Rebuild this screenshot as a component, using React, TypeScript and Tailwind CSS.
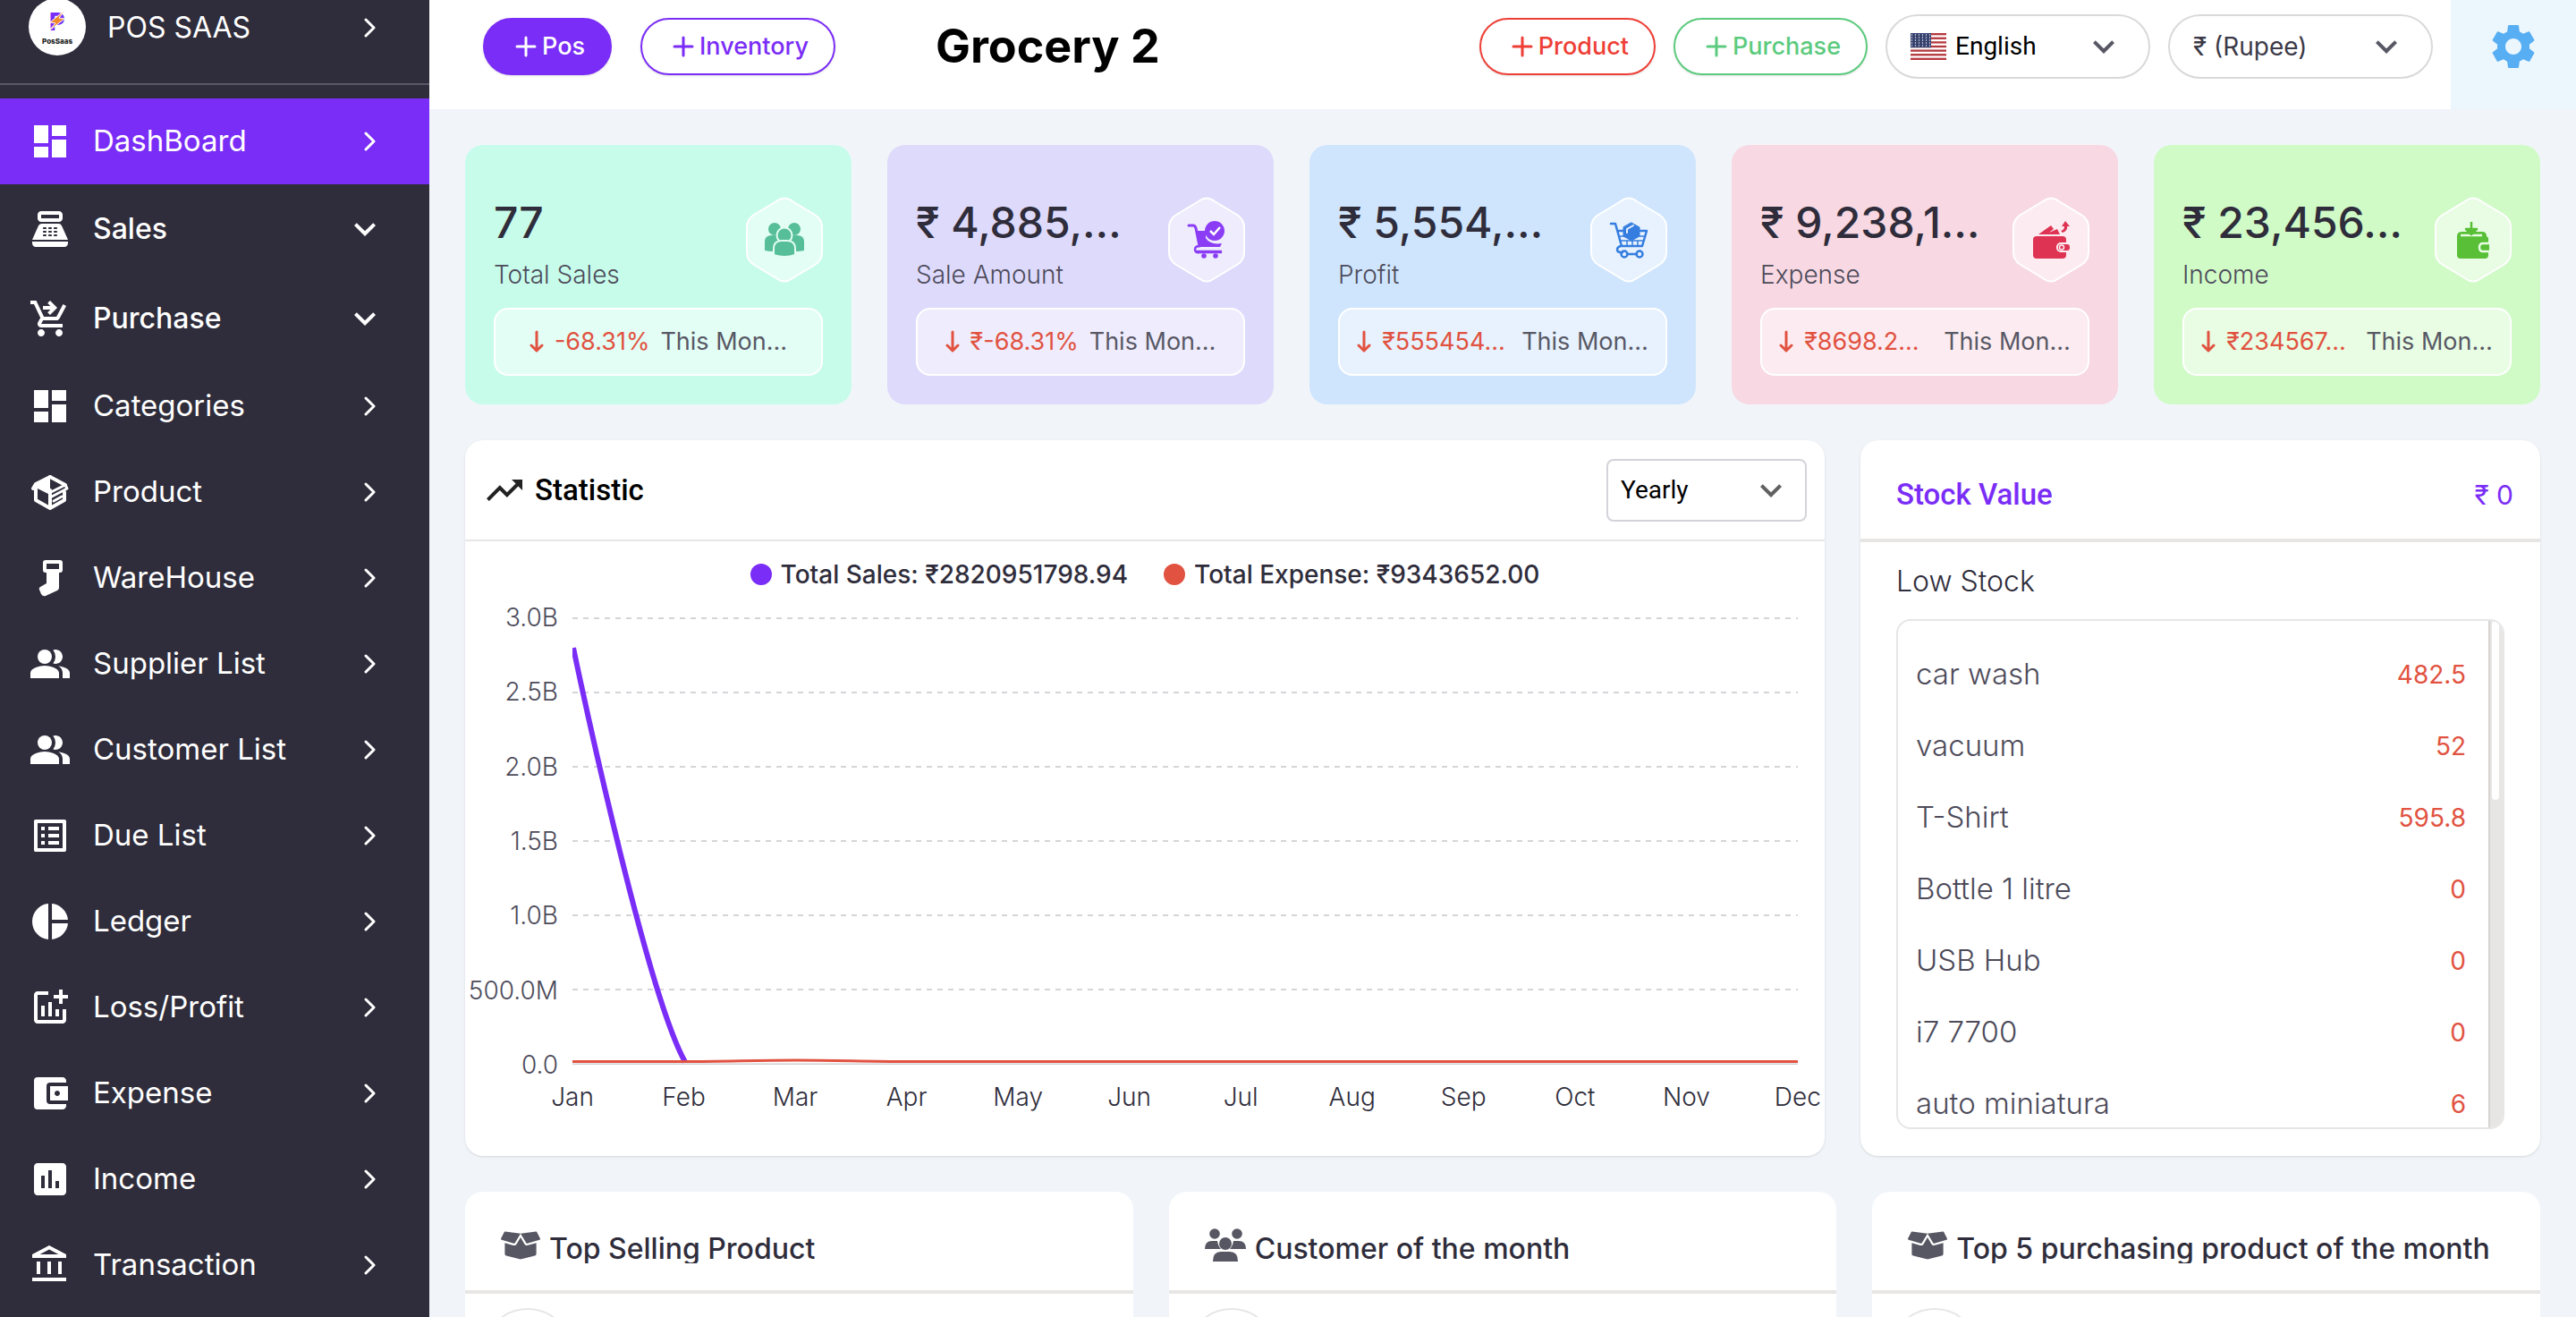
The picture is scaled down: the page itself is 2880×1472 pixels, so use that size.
import type { ComponentType, ReactNode } from "react";
import {
  MdAccountBalanceWallet,
  MdAddchart,
  MdAssessment,
  MdDashboard,
  MdKeyboardArrowDown,
  MdListAlt,
  MdOutlineAccountBalance,
  MdPeopleAlt,
  MdPieChart,
  MdPointOfSale,
  MdSettings,
  MdShoppingCartCheckout,
  MdTrendingUp,
} from "react-icons/md";
import { FaBoxOpen } from "react-icons/fa";

type IconType = ComponentType<{ className?: string }>;

/* ---------- drawings ---------- */

function Logo() {
  return (
    <svg viewBox="0 0 64 64" className="size-16 shrink-0" role="img" aria-label="PosSaas">
      <circle cx="32" cy="32" r="32" fill="#fff" />
      <text x="23" y="36" fontSize="27" fontWeight="800" fill="#7a2df6" fontFamily="Inter, sans-serif">P</text>
      <path d="M41 13 24 27l6 1-8 9 18-14-6-1z" fill="#f08a2c" stroke="#fff" strokeWidth="1" />
      <text x="32" y="51" fontSize="8" fontWeight="800" fill="#222" textAnchor="middle" fontFamily="Inter, sans-serif">PosSaas</text>
    </svg>
  );
}

function ProductIcon({ className }: { className?: string }) {
  return (
    <svg viewBox="0 0 48 48" className={className} fill="none" stroke="currentColor" strokeWidth="4" strokeLinejoin="round" strokeLinecap="round">
      <path d="M8 20v13l16 9 16-9V24" />
      <path d="M24 22v19" />
      <path d="M24 7 8 15l-3 5" />
      <path d="M24 7l17 9" />
      <path d="M24 6 9 15l-4 5 4 2 1-2 14 7z" fill="currentColor" stroke="none" />
      <path d="M25 24l16-8 2 4-17 9" strokeWidth="3" />
      <path d="M28 34l9-5" strokeWidth="3" />
    </svg>
  );
}

function WarehouseIcon({ className }: { className?: string }) {
  return (
    <svg viewBox="0 0 48 48" className={className} fill="none" stroke="currentColor" strokeWidth="4" strokeLinejoin="round">
      <rect x="18" y="6" width="18" height="10" rx="1" />
      <path d="M20 16v14l-7 4q-2 1-1 3l2 5q2 3 5 2l13-6q2-1 2-3V16z" fill="currentColor" stroke="none" />
    </svg>
  );
}

function ChevronRight() {
  return (
    <svg viewBox="0 0 14 24" className="mr-[59px] h-6 w-3.5 shrink-0" fill="none" stroke="currentColor" strokeWidth="3" strokeLinecap="round" strokeLinejoin="round">
      <path d="M2 3l9 9-9 9" />
    </svg>
  );
}

function PlusIcon() {
  return (
    <svg viewBox="0 0 24 24" className="size-6 shrink-0" stroke="currentColor" strokeWidth="3" strokeLinecap="round">
      <path d="M12 2v20M2 12h20" />
    </svg>
  );
}

function ArrowDown() {
  return (
    <svg viewBox="0 0 16 26" className="h-[26px] w-4 shrink-0" fill="none" stroke="currentColor" strokeWidth="3" strokeLinecap="round" strokeLinejoin="round">
      <path d="M8 2v21M2 17l6 6 6-6" />
    </svg>
  );
}

function Flag() {
  const stripes = [0, 2, 4, 6, 8, 10, 12];
  const rows = [2, 5, 8, 11, 14];
  const cols = [2, 6, 10, 14, 18, 22];
  return (
    <svg viewBox="0 0 40 30" className="h-[30px] w-10 shrink-0" preserveAspectRatio="none" aria-hidden="true">
      <rect width="40" height="30" fill="#fff" />
      {stripes.map((s) => (
        <rect key={s} y={(s * 30) / 13} width="40" height={30 / 13} fill="#b5383f" />
      ))}
      <rect width="23" height="16.2" fill="#35406e" />
      {rows.map((y) => cols.map((x) => <circle key={`${x}-${y}`} cx={x - 0.5} cy={y} r="0.7" fill="#fff" />))}
    </svg>
  );
}

function HexBadge({ children }: { children: ReactNode }) {
  return (
    <svg viewBox="0 0 86 96" className="mt-1 h-24 w-[86px] shrink-0" aria-hidden="true">
      <path
        d="M34 5Q43 -2 52 5L77 20Q85 25 85 34V62Q85 71 77 76L52 91Q43 98 34 91L9 76Q1 71 1 62V34Q1 25 9 20Z"
        fill="#fff"
        fillOpacity="0.5"
        stroke="#fff"
        strokeWidth="2"
      />
      {children}
    </svg>
  );
}

const crowdArt = (
  <g fill="#56be98">
    <circle cx="32" cy="36" r="7" />
    <circle cx="54" cy="36" r="7" />
    <path d="M21 60V50q0-7 8-7h6q5 0 5 5v12q-10 2-19 0zM65 60V50q0-7-8-7h-6q-5 0-5 5v12q10 2 19 0z" />
    <circle cx="43" cy="43" r="8.5" stroke="#e3fdf5" strokeWidth="2" />
    <path d="M31 65V58q0-9 9-9h6q9 0 9 9v7q-12 4-24 0z" stroke="#e3fdf5" strokeWidth="2" />
  </g>
);

const saleArt = (
  <g>
    <path d="M23 32h5q2 0 3 3l4 20" fill="none" stroke="#8b3df5" strokeWidth="3" strokeLinecap="round" />
    <path d="M32 38h10v8q5 8 18 6l-2 4H35z" fill="#8b3df5" />
    <path d="M35 55q-5 0-5 4t5 3h24M31 61h28" fill="none" stroke="#8b3df5" strokeWidth="2.5" strokeLinecap="round" />
    <circle cx="40" cy="66" r="2.8" fill="#8b3df5" />
    <circle cx="53" cy="66" r="2.8" fill="#8b3df5" />
    <circle cx="52" cy="38" r="11" fill="#8b3df5" />
    <path d="M47 38l4 4 7-8" fill="none" stroke="#fff" strokeWidth="2.5" />
  </g>
);

const profitArt = (
  <g fill="none" stroke="#357ddf" strokeWidth="2.5" strokeLinecap="round" strokeLinejoin="round">
    <path d="M23 30h5l7 25M31 38h6M56 38h7l-5 17H34q-4 1-4 4t4 3h2M41 64h11" />
    <path d="M33 44h6M55 44h6M34 49h26M41 49v6M47 49v6M53 49v6" strokeWidth="1.5" />
    <circle cx="38" cy="64" r="3.5" />
    <circle cx="55" cy="64" r="3.5" />
    <path d="M46 29l9 5v10l-9 5-9-5V34z" fill="#357ddf" stroke-width="1" />
    <path d="M41 40v-4l7-4" stroke="#e7f2fe" strokeWidth="2" />
  </g>
);

const expenseArt = (
  <g fill="#de3353">
    <rect x="23" y="44" width="37" height="25" rx="4" />
    <path d="M29 42l14-10 3 4-8 6zM36 42l14-6 3 6z" />
    <path d="M56 40q6-2 5-7h3l-5-6-4 6h3q0 4-4 5z" />
    <rect x="50" y="52" width="15" height="9" rx="4" stroke="#fdebf0" strokeWidth="2" />
    <circle cx="55" cy="56.500" r="2.500" fill="#de3353" stroke="#fdebf0" strokeWidth="1.500" />
  </g>
);

const incomeArt = (
  <g fill="#58bf36">
    <path d="M25 44q0-5 6-5h22q5 0 5 5l2 2v19q0 4-4 4H29q-4 0-4-4z" />
    <path d="M29 43h24M42 39" stroke="#e7fde3" strokeWidth="2.500" />
    <path d="M41 28v12M35 36l6 6 6-6z" stroke="#58bf36" strokeWidth="2.500" strokeLinejoin="round" />
    <path d="M61 52h-7q-4 0-4 4.500t4 4.500h7" stroke="#e7fde3" strokeWidth="2.500" />
  </g>
);

function CustomersIcon({ className }: { className?: string }) {
  return (
    <svg viewBox="0 0 46 38" className={className} fill="currentColor" aria-hidden="true">
      <circle cx="11" cy="6" r="5.800" />
      <circle cx="36" cy="6" r="5.800" />
      <path d="M0 23q0-9 8-9h6q1 6 4 9zM46 23q0-9-8-9h-6q-1 6-4 9z" />
      <circle cx="23" cy="17" r="7" />
      <path d="M9 37q0-11 9-11h10q9 0 9 11z" />
    </svg>
  );
}

/* ---------- sidebar ---------- */

const navItems: { label: string; icon: IconType; expandable?: boolean; active?: boolean }[] = [
  { label: "DashBoard", icon: MdDashboard, active: true },
  { label: "Sales", icon: MdPointOfSale, expandable: true },
  { label: "Purchase", icon: MdShoppingCartCheckout, expandable: true },
  { label: "Categories", icon: MdDashboard },
  { label: "Product", icon: ProductIcon },
  { label: "WareHouse", icon: WarehouseIcon },
  { label: "Supplier List", icon: MdPeopleAlt },
  { label: "Customer List", icon: MdPeopleAlt },
  { label: "Due List", icon: MdListAlt },
  { label: "Ledger", icon: MdPieChart },
  { label: "Loss/Profit", icon: MdAddchart },
  { label: "Expense", icon: MdAccountBalanceWallet },
  { label: "Income", icon: MdAssessment },
  { label: "Transaction", icon: MdOutlineAccountBalance },
];

function Sidebar() {
  return (
    <aside className="w-[480px] shrink-0 overflow-hidden bg-[#2f2d3b] text-white">
      <a href="#home" className="-mt-0.5 flex h-[97px] items-start border-b-2 border-[#5a5868] pl-8">
        <Logo />
        <span className="ml-6 flex-1 text-[32px] leading-[66px]">POS SAAS</span>
        <span className="flex h-[66px] items-center">
          <ChevronRight />
        </span>
      </a>
      <nav className="mt-[15px] flex flex-col">
        {navItems.map(({ label, icon: Icon, expandable, active }) => {
          const inner = (
            <>
              <Icon className="size-12 shrink-0" />
              <span className={expandable ? "ml-6 flex-1 text-left font-medium" : "ml-6 flex-1 text-left"}>{label}</span>
              {expandable ? <MdKeyboardArrowDown className="mr-12 size-12 shrink-0" /> : <ChevronRight />}
            </>
          );
          if (expandable) {
            return (
              <button key={label} type="button" aria-expanded={false} className="flex h-[100px] items-center pl-8 text-[32px]">
                {inner}
              </button>
            );
          }
          return (
            <a
              key={label}
              href={`#${label}`}
              className={
                active
                  ? "flex h-24 items-center bg-[#7a2df6] pl-8 text-[33px]"
                  : "flex h-24 items-center pl-8 text-[33px]"
              }
            >
              {inner}
            </a>
          );
        })}
      </nav>
    </aside>
  );
}

/* ---------- header ---------- */

function Pill({ label, tone }: { label: string; tone: string }) {
  return (
    <button type="button" className={`flex h-16 items-center gap-1.5 rounded-full border-2 pr-7 pl-[34px] text-[27px] font-medium shadow-sm ${tone}`}>
      <PlusIcon />
      {label}
    </button>
  );
}

function Header() {
  return (
    <header className="flex h-[122px] bg-white pl-[60px]">
      <div className="flex flex-1 items-start pt-5">
        <div className="flex gap-8">
          <Pill label="Pos" tone="border-[#7a2df6] bg-[#7a2df6] text-white" />
          <Pill label="Inventory" tone="border-[#7a2df6] bg-white text-[#7a2df6]" />
        </div>
        <h1 className="ml-28 text-[52px] leading-16 font-bold text-black">Grocery 2</h1>
      </div>
      <div className="flex items-start gap-5 pt-4 pr-5">
        <div className="flex gap-5 pt-1">
          <Pill label="Product" tone="border-[#ee3f36] bg-white text-[#ee3f36]" />
          <Pill label="Purchase" tone="border-[#5ccb7e] bg-white text-[#5ccb7e]" />
        </div>
        <label className="relative flex h-18 w-[296px] items-center rounded-full border-2 border-[#d9d9d9] pl-[26px]">
          <Flag />
          <select aria-label="Language" className="h-full flex-1 appearance-none bg-transparent pl-2.5 font-[Roboto,sans-serif] text-[28px] text-black">
            <option>English</option>
          </select>
          <MdKeyboardArrowDown className="pointer-events-none absolute right-[26px] size-12 text-[#585865]" />
        </label>
        <label className="relative flex h-18 w-[296px] items-center rounded-full border-2 border-[#d9d9d9] pl-[26px]">
          <select aria-label="Currency" className="h-full flex-1 appearance-none bg-transparent text-[28px] text-[#3c3a48]">
            <option>₹ (Rupee)</option>
          </select>
          <MdKeyboardArrowDown className="pointer-events-none absolute right-[26px] size-12 text-[#585865]" />
        </label>
      </div>
      <div className="flex w-[140px] items-start justify-center bg-[#ebf6fd] pt-[22px]">
        <button type="button" aria-label="Settings">
          <MdSettings className="size-15 text-[#58aef2]" />
        </button>
      </div>
    </header>
  );
}

/* ---------- summary cards ---------- */

const summary = [
  { value: "77", label: "Total Sales", change: "-68.31%", long: false, bg: "bg-[#c7fceb]", art: crowdArt },
  { value: "₹ 4,885,…", label: "Sale Amount", change: "₹-68.31%", long: false, bg: "bg-[#dedafb]", art: saleArt },
  { value: "₹ 5,554,…", label: "Profit", change: "₹555454…", long: true, bg: "bg-[#cfe5fd]", art: profitArt },
  { value: "₹ 9,238,1…", label: "Expense", change: "₹8698.2…", long: true, bg: "bg-[#f8d8e2]", art: expenseArt },
  { value: "₹ 23,456…", label: "Income", change: "₹234567…", long: true, bg: "bg-[#d0fbc7]", art: incomeArt },
];

function SummaryCards() {
  return (
    <section className="grid grid-cols-5 gap-10">
      {summary.map((s) => (
        <article key={s.label} className={`rounded-[20px] px-8 pt-[54px] pb-8 ${s.bg}`}>
          <div className="flex items-start justify-between">
            <div className="min-w-0">
              <p className="text-[48px] leading-[66px] font-medium whitespace-nowrap text-[#2f2d3b]">{s.value}</p>
              <p className="text-[28px] leading-[50px] font-light text-[#4d4b5a]">{s.label}</p>
            </div>
            <HexBadge>{s.art}</HexBadge>
          </div>
          <div className="mt-3 flex h-19 items-center justify-center rounded-2xl border-2 border-white bg-white/50 text-[27px] whitespace-nowrap">
            <span className="text-[#e15241]">
              <ArrowDown />
            </span>
            <span className={s.long ? "ml-3 min-w-[144px] text-[#e15241]" : "ml-3 text-[#e15241]"}>{s.change}</span>
            <span className="ml-3 text-[#585865]">This Mon…</span>
          </div>
        </article>
      ))}
    </section>
  );
}

/* ---------- statistic chart ---------- */

const yLabels = ["3.0B", "2.5B", "2.0B", "1.5B", "1.0B", "500.0M", "0.0"];
const months = ["Jan", "Feb", "Mar", "Apr", "May", "Jun", "Jul", "Aug", "Sep", "Oct", "Nov", "Dec"];

function Plot() {
  return (
    <svg viewBox="0 0 1370 500" preserveAspectRatio="none" className="my-4 h-[500px] min-w-0 flex-1" aria-label="Sales and expense by month">
      {[1, 84, 167, 250, 333, 416].map((y) => (
        <line key={y} x1="0" x2="1370" y1={y} y2={y} stroke="#d5d5d9" strokeWidth="2" strokeDasharray="6 6" />
      ))}
      <line x1="0" x2="1370" y1="500" y2="500" stroke="#cfcfd3" strokeWidth="3" />
      <path d="M1 34C1 34 81 417 126 497" fill="none" stroke="#7a2df6" strokeWidth="6" vectorEffect="non-scaling-stroke" />
      <path d="M0 496.500H126C170 496.500 206 495 250 495S330 496.500 374 496.500H1370" fill="none" stroke="#e15241" strokeWidth="3" vectorEffect="non-scaling-stroke" />
    </svg>
  );
}

function Legend({ color, text }: { color: string; text: string }) {
  return (
    <span className="flex items-center gap-2.5">
      <span className={`size-6 rounded-full ${color}`} />
      {text}
    </span>
  );
}

function Statistic() {
  return (
    <section className="flex flex-col overflow-hidden rounded-[20px] bg-white shadow-sm">
      <div className="flex h-[113px] items-center border-b-2 border-[#e7e7e7] pr-5 pl-5">
        <MdTrendingUp className="size-12 text-[#222]" />
        <h2 className="ml-[10px] flex-1 font-[Roboto,sans-serif] text-[33px] font-medium text-black">Statistic</h2>
        <label className="relative flex h-[70px] w-56 items-center rounded-lg border-2 border-[#d4d3da]">
          <select aria-label="Period" className="h-full flex-1 appearance-none bg-transparent pl-3.5 font-[Roboto,sans-serif] text-[28px] text-black">
            <option>Yearly</option>
          </select>
          <MdKeyboardArrowDown className="pointer-events-none absolute right-3.5 size-12 text-[#616161]" />
        </label>
      </div>
      <div className="mt-[19px] flex justify-center gap-10 text-[28px] leading-9 font-medium text-[#2f2d3b]">
        <Legend color="bg-[#7a2df6]" text="Total Sales: ₹2820951798.94" />
        <Legend color="bg-[#e15241]" text="Total Expense: ₹9343652.00" />
      </div>
      <div className="mt-3.5 flex pr-[30px]">
        <div className="mr-4 flex w-[104px] flex-col justify-between text-right text-[28px] leading-8 font-light text-[#4d4b5a]">
          {yLabels.map((y) => (
            <span key={y}>{y}</span>
          ))}
        </div>
        <Plot />
      </div>
      <div className="mr-[30px] ml-[120px] flex justify-between text-[28px] leading-10 font-light text-[#2f2d3b]">
        {months.map((m) => (
          <span key={m} className="flex w-0 justify-center">
            {m}
          </span>
        ))}
      </div>
    </section>
  );
}

/* ---------- stock ---------- */

const lowStock = [
  ["car wash", "482.5"],
  ["vacuum", "52"],
  ["T-Shirt", "595.8"],
  ["Bottle 1 litre", "0"],
  ["USB Hub", "0"],
  ["i7 7700", "0"],
  ["auto miniatura", "6"],
];

function Stock() {
  return (
    <section className="rounded-[20px] bg-white pb-[30px] shadow-sm">
      <div className="flex h-[114px] items-center justify-between border-b-4 border-[#e8e6e5] pt-3 pr-[30px] pl-10 text-[#7a2df6]">
        <h2 className="font-[Roboto,sans-serif] text-[33px] font-medium">Stock Value</h2>
        <span className="text-[30px]">₹ 0</span>
      </div>
      <h3 className="mt-[22px] px-10 text-[32px] leading-11 font-light text-[#2f2d3b]">Low Stock</h3>
      <div className="mx-10 mt-5 flex h-[570px] overflow-hidden rounded-2xl border-2 border-[#e6e6e6]">
        <ul className="flex-1 pt-5 pr-[25px] pl-5">
          {lowStock.map(([name, qty]) => (
            <li key={name} className="flex h-20 items-center justify-between text-[33px] font-light text-[#4d4b5a]">
              <span>{name}</span>
              <span className="text-[28px] font-normal text-[#e15241]">{qty}</span>
            </li>
          ))}
        </ul>
        <div className="w-4 border-l-2 border-[#d6d4d2] bg-[#e8e6e5] pl-0.5">
          <div className="h-[200px] w-2 rounded-full bg-white" />
        </div>
      </div>
    </section>
  );
}

/* ---------- bottom cards ---------- */

const ranking: { title: string; icon: IconType; size: string }[] = [
  { title: "Top Selling Product", icon: FaBoxOpen, size: "size-11" },
  { title: "Customer of the month", icon: CustomersIcon, size: "h-[38px] w-[46px]" },
  { title: "Top 5 purchasing product of the month", icon: FaBoxOpen, size: "size-11" },
];

function RankingCards() {
  return (
    <section className="grid grid-cols-3 gap-10">
      {ranking.map(({ title, icon: Icon, size }) => (
        <article key={title} className="h-[600px] rounded-[20px] bg-white">
          <div className="flex h-[114px] items-start border-b-4 border-[#e8e6e5] pt-10 pl-10">
            <span className="flex h-10 items-center text-[#575663]">
              <Icon className={`shrink-0 ${size}`} />
            </span>
            <h2 className="ml-2.5 h-10 overflow-hidden text-[32px] leading-12 font-medium whitespace-nowrap text-[#2f2d3b]">{title}</h2>
          </div>
          <div className="mt-4 ml-5 size-[100px] rounded-full border-2 border-[#e6e6e6]" />
        </article>
      ))}
    </section>
  );
}

export default function App() {
  return (
    <div className="flex h-screen overflow-hidden bg-[#f1f5f9] font-[Inter,sans-serif]">
      <Sidebar />
      <div className="min-w-0 flex-1">
        <Header />
        <main className="flex flex-col gap-10 p-10">
          <SummaryCards />
          <div className="grid grid-cols-[2fr_1fr] gap-10">
            <Statistic />
            <Stock />
          </div>
          <RankingCards />
        </main>
      </div>
    </div>
  );
}
